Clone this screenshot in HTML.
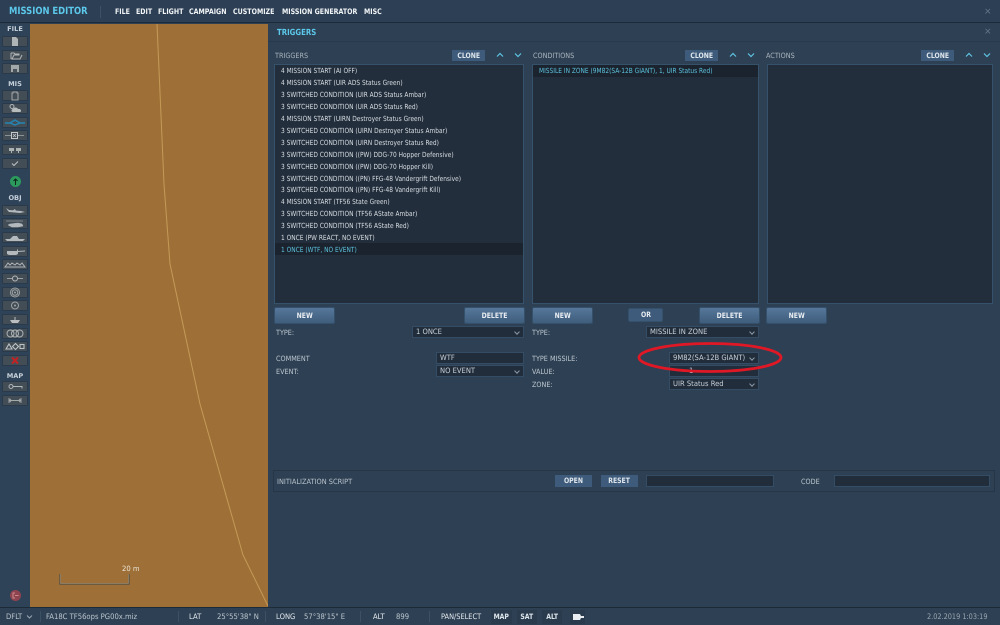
<!DOCTYPE html>
<html><head><meta charset="utf-8"><style>
html,body{margin:0;padding:0;width:1000px;height:625px;overflow:hidden;background:#2e4053}
*{box-sizing:border-box}
body{font-family:"DejaVu Sans","Liberation Sans",sans-serif;position:relative;text-rendering:geometricPrecision}
#w{position:absolute;left:0;top:0;width:1000px;height:625px;filter:blur(.3px)}
.a,.t,.btn,.hb,.sel,.inp,.tb{position:absolute}
.t{white-space:nowrap;font-size:7.2px;line-height:10px;color:#bcc6cf;height:10px;transform-origin:0 50%;transform:scaleX(var(--s,.9))}
.w{color:#e4e9ee}
.m{font-weight:bold;font-size:7.6px;color:#f2f5f7;top:7px;--s:.83}
.st{top:612px;font-size:7.6px;--s:.9}
.btn{height:15px;width:59px;top:308px;background:linear-gradient(#56779a,#3f5d7c);border-radius:1px;color:#e8edf2;font-weight:bold;font-size:7.4px;line-height:15px;text-align:center;box-shadow:0 0 0 1px #34506a}
.hb{height:11px;background:#3f5b7b;color:#dfe6ec;font-weight:bold;font-size:7.4px;line-height:11px;text-align:center}
.btn span,.hb span{display:inline-block;transform:scaleX(.83)}
.list{position:absolute;top:64px;height:240px;background:#222e3c;border:1px solid #36516a}
.sel,.inp{height:12px;background:#212d3b;border:1px solid #344d65;color:#c8d0d8;font-size:7.4px;line-height:10px;padding-left:3px;white-space:nowrap}
.sel span,.inp span{display:inline-block;transform-origin:0 50%;transform:scaleX(.92)}
.sel:after{content:"";position:absolute;right:4px;top:3px;width:3px;height:3px;border-right:1px solid #8d9aa6;border-bottom:1px solid #8d9aa6;transform:rotate(45deg)}
.row{position:absolute;left:6px;margin-top:1px;font-size:7px;line-height:10px;color:#d6dce2;white-space:nowrap;transform-origin:0 50%;transform:scaleX(.84)}
.tb{left:2px;width:26px;height:11px;background:#434d56;border:1px solid #2a3a4a;border-radius:1px}
.lbl{position:absolute;left:0;width:30px;text-align:center;color:#c6d0da;font-weight:bold;font-size:6.6px;line-height:8px}
.tb svg{position:absolute;left:-1px;top:-1px;opacity:.85}
</style></head><body><div id="w">

<!-- Top bar -->
<div class="a" style="left:0;top:0;width:1000px;height:23px;background:#2d3f54;border-bottom:1px solid #1d2a38"></div>
<div class="t" style="left:9px;top:6px;font-size:10px;font-weight:bold;color:#5cc8ea;line-height:11px;height:11px;--s:.84">MISSION EDITOR</div>
<div class="a" style="left:100px;top:6px;width:1px;height:12px;background:#3c5166"></div>
<div class="t m" style="left:115px">FILE</div>
<div class="t m" style="left:136px">EDIT</div>
<div class="t m" style="left:158px">FLIGHT</div>
<div class="t m" style="left:189px">CAMPAIGN</div>
<div class="t m" style="left:233px">CUSTOMIZE</div>
<div class="t m" style="left:282px">MISSION GENERATOR</div>
<div class="t m" style="left:364px">MISC</div>
<div class="t" style="left:984px;top:7px;color:#66788a;font-size:9px;--s:1">×</div>

<!-- Left toolbar -->
<div class="a" style="left:0;top:24px;width:30px;height:584px;background:#2e4258"></div>
<div class="lbl" style="top:25px">FILE</div>
<div class="tb" style="top:36px"><svg width="26" height="11"><path d="M10 1h4l2 2v7h-6z" fill="#c4c8c8"/></svg></div>
<div class="tb" style="top:50px"><svg width="26" height="11"><path d="M9 3h3l1 1h4v1h-5l-2 4h8l2-4M9 3v6" fill="none" stroke="#c4c8c8" stroke-width="1"/></svg></div>
<div class="tb" style="top:63px"><svg width="26" height="11"><path d="M9 2h8v7h-8z" fill="#b4b8b8"/><path d="M11 6h4v3h-4z" fill="#4a555e"/></svg></div>
<div class="lbl" style="top:80px">MIS</div>
<div class="tb" style="top:90px"><svg width="26" height="11"><path d="M11 2h4v1h1v7h-6V3h1z" fill="none" stroke="#b4b8b8"/></svg></div>
<div class="tb" style="top:103px"><svg width="26" height="11"><circle cx="10" cy="3.5" r="2" fill="none" stroke="#c4c8c8"/><path d="M11 9c-2 0-2-3 0-3 1-2 4-2 5 0 3-1 4 3 2 3z" fill="#ccd0d0"/></svg></div>
<div class="tb" style="top:117px"><svg width="26" height="11"><path d="M3 6h5l5-3 5 3 5 0M8 6l5 2 5-2" fill="none" stroke="#1f8fc4" stroke-width="1.4"/></svg></div>
<div class="tb" style="top:130px"><svg width="26" height="11"><path d="M3 5.5h6M16 5.5h6" stroke="#9aa0a0"/><rect x="9.5" y="2.5" width="6" height="6" fill="none" stroke="#ddd"/><path d="M11 4l3 3M14 4l-3 3" stroke="#ddd" stroke-width=".8"/></svg></div>
<div class="tb" style="top:144px"><svg width="26" height="11"><path d="M7 4h5v3H10v2H9V7H7zM14 4h5v3h-2v2h-1V7h-2z" fill="#c0c4c4"/></svg></div>
<div class="tb" style="top:158px"><svg width="26" height="11"><path d="M10 5.5l2 2 4-4" fill="none" stroke="#d0d4d4" stroke-width="1.1"/></svg></div>
<div class="a" style="left:10px;top:176px;width:11px;height:11px;border-radius:50%;background:#2b9a5c"></div>
<svg class="a" style="left:10px;top:176px" width="11" height="11"><path d="M5.5 9V3M3.5 5l2-2 2 2" fill="none" stroke="#10261c" stroke-width="1"/></svg>
<div class="lbl" style="top:194px">OBJ</div>
<div class="tb" style="top:205px"><svg width="26" height="11"><path d="M4 3l3 2 12 1 4 1-5 1-11-1-1-1zM10 6l3-2 1 2" fill="#c8ccd0"/></svg></div>
<div class="tb" style="top:218px"><svg width="26" height="11"><path d="M4 3h17M6 7l2-1 8-1 4 1 1 2-5 1H10z" fill="#c8ccd0" stroke="#c8ccd0" stroke-width=".5"/></svg></div>
<div class="tb" style="top:232px"><svg width="26" height="11"><path d="M3 7h20l-2 2H5zM8 7l3-3h4l2 3z" fill="#c8ccd0"/></svg></div>
<div class="tb" style="top:246px"><svg width="26" height="11"><path d="M5 5h10V3.500h-2 3v1.500l7-.5v1l-7 .5v2l-2 1H7L5 8z" fill="#c8ccd0"/></svg></div>
<div class="tb" style="top:259px"><svg width="26" height="11"><path d="M3 8l3-4 2 2 2-2 3 2 2-2 3 2 2-2 3 4zM3 8h20" fill="none" stroke="#c0c4c8"/></svg></div>
<div class="tb" style="top:273px"><svg width="26" height="11"><path d="M5 5.500h5M16 5.500h5" stroke="#aaa"/><circle cx="13" cy="5.500" r="2.500" fill="none" stroke="#ccc"/></svg></div>
<div class="tb" style="top:287px"><svg width="26" height="11"><circle cx="13" cy="5.500" r="4.500" fill="none" stroke="#aeb2b2"/><circle cx="13" cy="5.500" r="2.800" fill="none" stroke="#aeb2b2"/><circle cx="13" cy="5.500" r="1" fill="#aeb2b2"/></svg></div>
<div class="tb" style="top:300px"><svg width="26" height="11"><circle cx="13" cy="5.500" r="3.500" fill="none" stroke="#aeb2b2"/><circle cx="13" cy="5.500" r="1" fill="#aeb2b2"/></svg></div>
<div class="tb" style="top:314px"><svg width="26" height="11"><path d="M8 6h10l-2 3h-6zM12.500 3h1v3h-1z" fill="#d0d4d4"/></svg></div>
<div class="tb" style="top:328px"><svg width="26" height="11"><circle cx="8.500" cy="5.500" r="3.500" fill="none" stroke="#c0c4c4"/><circle cx="13" cy="5.500" r="3.500" fill="none" stroke="#c0c4c4"/><circle cx="17.500" cy="5.500" r="3.500" fill="none" stroke="#c0c4c4"/></svg></div>
<div class="tb" style="top:341px"><svg width="26" height="11"><path d="M4 8l3-5 3 5z M13.500 2.500l3 3-3 3-3-3z" fill="none" stroke="#d4d8d8" stroke-width="1.1"/><rect x="18" y="3.500" width="4" height="4" fill="none" stroke="#d4d8d8" stroke-width="1.1"/></svg></div>
<div class="tb" style="top:355px"><svg width="26" height="11"><path d="M10 2.500l6 6M16 2.500l-6 6" stroke="#d81c1c" stroke-width="2"/></svg></div>
<div class="lbl" style="top:372px">MAP</div>
<div class="tb" style="top:381px"><svg width="26" height="11"><circle cx="9" cy="5.500" r="2" fill="none" stroke="#c4c8c8"/><path d="M11 5.500h9v2" fill="none" stroke="#c4c8c8"/></svg></div>
<div class="tb" style="top:395px"><svg width="26" height="11"><path d="M7 3v5M19 3v5M7 5.500h12M9 4l-2 1.500L9 7M17 4l2 1.500L17 7" fill="none" stroke="#b4b8b8" stroke-width=".9"/></svg></div>
<svg class="a" style="left:9px;top:589px" width="13" height="13"><circle cx="6.500" cy="6.500" r="5.500" fill="#8e4450"/><path d="M6 4H4v5h2M6 6.500h3.500" stroke="#c88" fill="none"/></svg>

<!-- Map -->
<div class="a" style="left:30px;top:24px;width:238px;height:584px;background:#9e7037"></div>
<svg class="a" style="left:30px;top:24px" width="238" height="584"><path d="M127 0L134 160 140 240 170 380 213 531 238 582" fill="none" stroke="#c49a58" stroke-width="1"/><path d="M30 550v10h69v-10" fill="none" stroke="#4b4a44" stroke-width="1.200"/><path d="M30.500 550v9.500h68v-9.500" fill="none" stroke="#c2b49a" stroke-width=".4"/></svg>
<div class="t" style="left:122px;top:564px;color:#ece6da;--s:.95">20 m</div>

<!-- Panel -->
<div class="a" style="left:268px;top:24px;width:732px;height:584px;background:#2e4053"></div>
<div class="a" style="left:268px;top:41px;width:732px;height:1px;background:#283a4c"></div>
<div class="t" style="left:277px;top:27px;font-size:8.4px;font-weight:bold;color:#5cc8ea;--s:.83">TRIGGERS</div>
<div class="t" style="left:984px;top:27px;color:#66788a;font-size:9px;--s:1">×</div>

<div class="t" style="left:275px;top:51px;color:#aab4be">TRIGGERS</div>
<div class="hb" style="left:452px;top:50px;width:33px"><span>CLONE</span></div>
<svg class="a" style="left:495px;top:51px" width="28" height="8"><path d="M2 5.500l3-3 3 3M20 2.500l3 3 3-3" fill="none" stroke="#5fc4e4" stroke-width="1.200"/></svg>
<div class="t" style="left:533px;top:51px;color:#aab4be">CONDITIONS</div>
<div class="hb" style="left:685px;top:50px;width:33px"><span>CLONE</span></div>
<svg class="a" style="left:728px;top:51px" width="28" height="8"><path d="M2 5.500l3-3 3 3M20 2.500l3 3 3-3" fill="none" stroke="#5fc4e4" stroke-width="1.200"/></svg>
<div class="t" style="left:766px;top:51px;color:#aab4be">ACTIONS</div>
<div class="hb" style="left:921px;top:50px;width:33px"><span>CLONE</span></div>
<svg class="a" style="left:964px;top:51px" width="28" height="8"><path d="M2 5.500l3-3 3 3M20 2.500l3 3 3-3" fill="none" stroke="#5fc4e4" stroke-width="1.200"/></svg>

<div class="list" style="left:274px;width:250px">
<div class="row" style="top:0">4 MISSION START (AI OFF)</div>
<div class="row" style="top:12px">4 MISSION START (UIR ADS Status Green)</div>
<div class="row" style="top:24px">3 SWITCHED CONDITION (UIR ADS Status Ambar)</div>
<div class="row" style="top:36px">3 SWITCHED CONDITION (UIR ADS Status Red)</div>
<div class="row" style="top:48px">4 MISSION START (UIRN Destroyer Status Green)</div>
<div class="row" style="top:60px">3 SWITCHED CONDITION (UIRN Destroyer Status Ambar)</div>
<div class="row" style="top:72px">3 SWITCHED CONDITION (UIRN Destroyer Status Red)</div>
<div class="row" style="top:84px">3 SWITCHED CONDITION ((PW) DDG-70 Hopper Defensive)</div>
<div class="row" style="top:96px">3 SWITCHED CONDITION ((PW) DDG-70 Hopper Kill)</div>
<div class="row" style="top:108px">3 SWITCHED CONDITION ((PN) FFG-48 Vandergrift Defensive)</div>
<div class="row" style="top:119px">3 SWITCHED CONDITION ((PN) FFG-48 Vandergrift Kill)</div>
<div class="row" style="top:131px">4 MISSION START (TF56 State Green)</div>
<div class="row" style="top:143px">3 SWITCHED CONDITION (TF56 AState Ambar)</div>
<div class="row" style="top:155px">3 SWITCHED CONDITION (TF56 AState Red)</div>
<div class="row" style="top:167px">1 ONCE (PW REACT, NO EVENT)</div>
<div class="a" style="left:0;top:178px;width:248px;height:12px;background:#1a232e"></div>
<div class="row" style="top:179px;color:#5cc0dc">1 ONCE (WTF, NO EVENT)</div>
</div>
<div class="list" style="left:532px;width:227px">
<div class="a" style="left:0;top:0;width:225px;height:12px;background:#1a232e"></div>
<div class="row" style="top:0;color:#5cc0dc">MISSILE IN ZONE (9M82(SA-12B GIANT), 1, UIR Status Red)</div>
</div>
<div class="list" style="left:767px;width:226px"></div>

<div class="btn" style="left:275px"><span>NEW</span></div>
<div class="btn" style="left:465px"><span>DELETE</span></div>
<div class="btn" style="left:533px"><span>NEW</span></div>
<div class="btn" style="left:629px;width:33px;height:12px;top:309px;line-height:12px;background:#3f5b7b"><span>OR</span></div>
<div class="btn" style="left:700px"><span>DELETE</span></div>
<div class="btn" style="left:767px"><span>NEW</span></div>

<div class="t" style="left:276px;top:328px">TYPE:</div>
<div class="sel" style="left:412px;top:326px;width:112px"><span>1 ONCE</span></div>
<div class="t" style="left:276px;top:354px">COMMENT</div>
<div class="inp" style="left:436px;top:352px;width:88px"><span>WTF</span></div>
<div class="t" style="left:276px;top:367px">EVENT:</div>
<div class="sel" style="left:436px;top:365px;width:88px"><span>NO EVENT</span></div>

<div class="t" style="left:532px;top:328px">TYPE:</div>
<div class="sel" style="left:646px;top:326px;width:113px"><span>MISSILE IN ZONE</span></div>
<div class="t" style="left:532px;top:354px">TYPE MISSILE:</div>
<div class="sel" style="left:669px;top:352px;width:90px"><span>9M82(SA-12B GIANT)</span></div>
<div class="t" style="left:532px;top:367px">VALUE:</div>
<div class="inp" style="left:669px;top:365px;width:90px"><span style="margin-left:16px">1</span></div>
<div class="t" style="left:532px;top:380px">ZONE:</div>
<div class="sel" style="left:669px;top:378px;width:90px"><span>UIR Status Red</span></div>
<svg class="a" style="left:635px;top:340px" width="150" height="36"><ellipse cx="75" cy="17.500" rx="71" ry="14" fill="none" stroke="#e01826" stroke-width="2.800"/></svg>

<div class="a" style="left:273px;top:470px;width:722px;height:22px;background:#2e4053;border:1px solid #263646"></div>
<div class="t" style="left:277px;top:477px;color:#b8c2cc;--s:.92">INITIALIZATION SCRIPT</div>
<div class="hb" style="left:555px;top:475px;width:37px;height:12px;line-height:12px;"><span>OPEN</span></div>
<div class="hb" style="left:601px;top:475px;width:37px;height:12px;line-height:12px;"><span>RESET</span></div>
<div class="inp" style="left:646px;top:475px;width:128px;"></div>
<div class="t" style="left:801px;top:477px;">CODE</div>
<div class="inp" style="left:834px;top:475px;width:156px;"></div>

<!-- Status bar -->
<div class="a" style="left:0;top:607px;width:1000px;height:18px;background:#2e4053;border-top:1px solid #1d2a38"></div>
<div class="t st" style="left:6px;">DFLT</div>
<svg class="a" style="left:26px;top:614px" width="8" height="6"><path d="M1 1.500l2.500 2.500 2.500-2.500" fill="none" stroke="#9aa6b2"/></svg>
<div class="a" style="left:40px;top:611px;width:1px;height:11px;background:#3c5166"></div>
<div class="t st" style="left:46px;">FA18C TF56ops PG00x.miz</div>
<div class="a" style="left:178px;top:611px;width:1px;height:11px;background:#3c5166"></div>
<div class="t st w" style="left:189px;">LAT</div>
<div class="t st" style="left:217px;">25°55'38" N</div>
<div class="a" style="left:265px;top:611px;width:1px;height:11px;background:#3c5166"></div>
<div class="t st w" style="left:276px;">LONG</div>
<div class="t st" style="left:304px;">57°38'15" E</div>
<div class="a" style="left:360px;top:611px;width:1px;height:11px;background:#3c5166"></div>
<div class="t st w" style="left:373px;">ALT</div>
<div class="t st" style="left:396px;">899</div>
<div class="a" style="left:429px;top:611px;width:1px;height:11px;background:#3c5166"></div>
<div class="t st w" style="left:441px;--s:.87">PAN/SELECT</div>
<div class="hb" style="left:491px;top:610px;width:21px;height:14px;line-height:14px;background:#293b4d;"><span>MAP</span></div>
<div class="hb" style="left:517px;top:610px;width:20px;height:14px;line-height:14px;background:#293b4d;"><span>SAT</span></div>
<div class="hb" style="left:542px;top:610px;width:20px;height:14px;line-height:14px;background:#293b4d;"><span>ALT</span></div>
<div class="a" style="left:570px;top:610px;width:15px;height:14px;background:#293b4d"></div>
<svg class="a" style="left:570px;top:610px" width="15" height="14"><path d="M3 4h7l1 2h3v2h-3l-1 2H3z" fill="#e8ecf0"/></svg>
<div class="t st" style="left:927px;color:#9aa6b2;--s:.86">2.02.2019 1:03:19</div>
</div></body></html>
